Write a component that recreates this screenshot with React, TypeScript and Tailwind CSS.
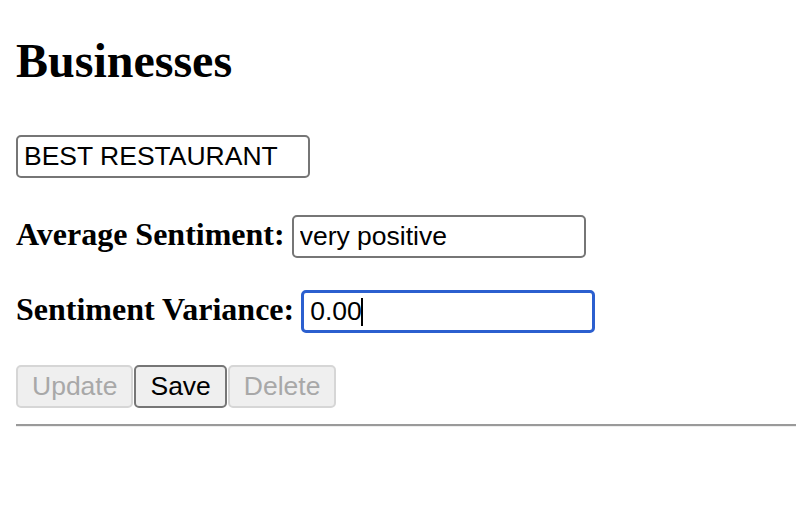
import { useState } from 'react'

const inputBase =
  "h-[43px] w-[294px] rounded-[5px] bg-white px-[6px] text-[26.5px] text-black outline-none [font-family:'Liberation_Sans',Arial,sans-serif]"

const btnBase =
  "h-[43px] rounded-[5px] border-2 bg-[#efefef] px-[14px] text-[26.5px] leading-none [font-family:'Liberation_Sans',Arial,sans-serif]"

export default function App() {
  const [nombre, setNombre] = useState('BEST RESTAURANT')
  const [sentimiento, setSentimiento] = useState('very positive')
  const [varianza, setVarianza] = useState('0.00')

  return (
    <div className="min-h-screen w-[796px] overflow-hidden bg-white pt-[33px] text-black [font-family:'Liberation_Serif','Times_New_Roman',serif]">
      <h1 className="ml-[16px] text-[48px] font-bold leading-[55px]">Businesses</h1>

      <div className="ml-[16px] mt-[47px]">
        <input
          className={inputBase + ' border-2 border-[#767676]'}
          value={nombre}
          onChange={(e) => setNombre(e.target.value)}
        />
      </div>

      <div className="ml-[16px] mt-[37px] flex items-baseline gap-[7px]">
        <b className="text-[32px] leading-[37px]">Average Sentiment:</b>
        <input
          className={inputBase + ' border-2 border-[#767676]'}
          value={sentimiento}
          onChange={(e) => setSentimiento(e.target.value)}
        />
      </div>

      <div className="ml-[16px] mt-[32px] flex items-baseline gap-[7px]">
        <b className="text-[32px] leading-[37px]">Sentiment Variance:</b>
        <div className="relative">
          <input
            className={inputBase + ' border-[3px] border-[#2b5fcf] px-[5px]'}
            value={varianza}
            onChange={(e) => setVarianza(e.target.value)}
          />
          <span className="absolute left-[60px] top-[8px] h-[28px] w-[2px] bg-black" />
        </div>
      </div>

      <div className="ml-[16px] mt-[32px] flex gap-[1px]">
        <button disabled className={btnBase + ' border-[#d6d6d6] text-[#a8a8a8]'}>Update</button>
        <button className={btnBase + ' border-[#767676] text-black'}>Save</button>
        <button disabled className={btnBase + ' border-[#d6d6d6] text-[#a8a8a8]'}>Delete</button>
      </div>

      <hr className="ml-[16px] mt-[16px] h-0 w-[780px] border-0 border-t-2 border-b border-t-[#9a9a9a] border-b-[#eeeeee]" />
    </div>
  )
}
